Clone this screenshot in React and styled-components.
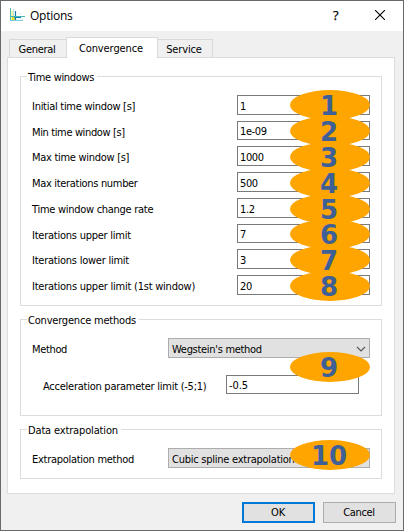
import React from "react";
import styled, { createGlobalStyle } from "styled-components";

const GlobalStyle = createGlobalStyle`
  * { box-sizing: border-box; }
  body { margin: 0; background: #fff; overflow: hidden; }
`;

const Dialog = styled.main`
  width: 404px;
  height: 531px;
  border: 1px solid #69696b;
  background: #f0f0f0;
  color: #000;
  font: 11px/14px "DejaVu Sans Condensed", "DejaVu Sans", sans-serif;
  font-stretch: condensed;
  white-space: nowrap;
`;

const TitleBar = styled.header`
  display: flex;
  align-items: center;
  height: 30px;
  padding: 0 18px 2px 8px;
  background: #fff;
`;

const Title = styled.h1`
  flex: 1;
  margin: 2px 0 0 3px;
  font: 12px/16px "Open Sans", sans-serif;
  letter-spacing: -0.25px;
`;

const HelpMark = styled.span`
  width: 8px;
  margin-right: 34px;
  font: 13px/16px "Open Sans", sans-serif;
  -webkit-text-stroke: 0.25px #000;
`;

const TabStrip = styled.nav`
  display: flex;
  align-items: flex-end;
  height: 26px;
  padding-left: 8px;
`;

const Tab = styled.div`
  display: flex;
  align-items: center;
  justify-content: center;
  width: ${(p) => p.$w}px;
  height: ${(p) => (p.$active ? 21 : 18)}px;
  margin-bottom: ${(p) => (p.$active ? -1 : 0)}px;
  padding-top: ${(p) => (p.$active ? 1 : 2)}px;
  padding-right: 2px;
  border: 1px solid #d9d9d9;
  border-bottom: 0;
  border-left-width: ${(p) => (p.$joined ? 0 : 1)}px;
  border-right-width: ${(p) => (p.$openRight ? 0 : 1)}px;
  background: ${(p) => (p.$active ? "#fff" : "#f0f0f0")};
  z-index: ${(p) => (p.$active ? 1 : 0)};
`;

const Panel = styled.section`
  display: flex;
  flex-direction: column;
  gap: 13px;
  width: 388px;
  height: 437px;
  margin-left: 6px;
  padding: 18px 12px 0;
  border: 1px solid #dcdcdc;
  background: #fff;
`;

const Group = styled.section`
  width: 362px;
  height: ${(p) => p.$h}px;
  border: 1px solid #dcdcdc;
`;

const Legend = styled.h2`
  width: max-content;
  height: 14px;
  margin: -7px 0 0 6px;
  padding: 1px 3px 0 1px;
  background: #fff;
  font: inherit;
`;

const Rows = styled.div`
  display: grid;
  grid-template-rows: 26px 25px 26px 26px 26px 25px 26px 20px;
  padding-top: 11px;
`;

const Row = styled.div`
  display: flex;
  align-items: flex-start;
  justify-content: space-between;
  margin-top: ${(p) => p.$top || 0}px;
  padding: 0 ${(p) => p.$right || 11}px 0 ${(p) => p.$left || 11}px;
`;

const Label = styled.label`
  height: 19px;
  padding-top: 5px;
`;

const Text = styled.span`
  letter-spacing: ${(p) => p.$track ?? -0.25}px;
`;

const Field = styled.div`
  position: relative;
  width: 133px;
  height: ${(p) => p.$h || 20}px;
  padding: ${(p) => (p.$h === 19 ? 3 : 4)}px 0 0 2px;
  border: 1px solid #7a7a7a;
  background: #fff;
`;

const Combo = styled.div`
  position: relative;
  display: flex;
  justify-content: space-between;
  width: 202px;
  height: 20px;
  padding: 3px 3px 0;
  border: 1px solid #adadad;
  background: #e1e1e1;
`;

const Badge = styled.span`
  position: absolute;
  z-index: 2;
  top: ${(p) => p.$top}px;
  right: -1px;
  display: flex;
  align-items: center;
  justify-content: center;
  width: 80px;
  height: 30px;
  padding: 1px 2px 0 0;
  border-radius: 50%;
  background: #ffa500;
  color: #3e6096;
  font: bold 26px/24px "DejaVu Sans", sans-serif;
`;

const Actions = styled.footer`
  display: flex;
  justify-content: flex-end;
  gap: 8px;
  padding: 8px 7px 0 0;
`;

const Button = styled.button`
  width: 73px;
  height: 21px;
  padding: 0 1px 0 0;
  border: ${(p) => (p.$primary ? "2px solid #0078d7" : "1px solid #adadad")};
  background: #e1e1e1;
  color: #000;
  font: inherit;
`;

const AppIcon = () => (
  <svg width="18" height="18" viewBox="0 0 18 18">
    <path d="M2 5h3v10H2z" fill="#f2f5a8" />
    <path d="M3 10h3v5H3z" fill="#dbe22d" />
    <path d="M1.5 2v12" stroke="#55bdb4" />
    <path d="M6.5 5v9" stroke="#147aa9" strokeWidth="1.2" />
    <path d="M4.5 3v7" stroke="#b5e0df" />
    <path d="M1 10.5h15" stroke="#42b8b4" />
    <path d="M5 11.5h7" stroke="#1a84b2" />
    <path d="M1 14.5h13" stroke="#7ccfd5" />
    <path d="M9 7.5h4M8 13h6" stroke="#dff1ef" />
  </svg>
);

const CloseIcon = () => (
  <svg width="10" height="10" viewBox="0 0 10 10">
    <path d="M0 0L10 10M10 0L0 10" stroke="#000" strokeWidth="1.1" />
  </svg>
);

const Chevron = () => (
  <svg width="10" height="12" viewBox="0 0 10 12">
    <path d="M1 5L5 9L9 5" fill="none" stroke="#555" strokeWidth="1.1" />
  </svg>
);

const ComboText = styled(Text)`
  padding-top: 1px;
`;

const parameters = [
  ["Initial time window [s]", "1", 20, -6, -0.28],
  ["Min time window [s]", "1e-09", 19, -6, -0.37],
  ["Max time window [s]", "1000", 20, -5, -0.29],
  ["Max iterations number", "500", 20, -5, -0.32],
  ["Time window change rate", "1.2", 20, -5, -0.28],
  ["Iterations upper limit", "7", 19, -6, -0.24],
  ["Iterations lower limit", "3", 20, -5, -0.24],
  ["Iterations upper limit (1st window)", "20", 20, -5, -0.23],
];

export default function App() {
  return (
    <>
      <GlobalStyle />
      <Dialog>
        <TitleBar>
          <AppIcon />
          <Title>Options</Title>
          <HelpMark>?</HelpMark>
          <CloseIcon />
        </TitleBar>
        <TabStrip>
          <Tab $w={57} $openRight><Text $track={-0.3}>General</Text></Tab>
          <Tab $w={92} $active><Text $track={-0.1}>Convergence</Text></Tab>
          <Tab $w={55} $joined><Text $track={-0.15}>Service</Text></Tab>
        </TabStrip>
        <Panel>
          <Group $h={230}>
            <Legend><Text $track={-0.33}>Time windows</Text></Legend>
            <Rows>
              {parameters.map(([label, value, height, top, track], i) => (
                <Row key={label}>
                  <Label><Text $track={track}>{label}</Text></Label>
                  <Field $h={height}>
                    <Text $track={-0.4}>{value}</Text>
                    <Badge $top={top}>{i + 1}</Badge>
                  </Field>
                </Row>
              ))}
            </Rows>
          </Group>
          <Group $h={97}>
            <Legend><Text $track={-0.2}>Convergence methods</Text></Legend>
            <Row $top={11}>
              <Label><Text $track={-0.35}>Method</Text></Label>
              <Combo>
                <ComboText $track={-0.3}>Wegstein's method</ComboText>
                <Chevron />
                <Badge $top={13}>9</Badge>
              </Combo>
            </Row>
            <Row $top={17} $left={22} $right={22}>
              <Label><Text>Acceleration parameter limit (-5;1)</Text></Label>
              <Field $h={19}><Text $track={-0.1}>-0.5</Text></Field>
            </Row>
          </Group>
          <Group $h={50}>
            <Legend><Text $track={-0.15}>Data extrapolation</Text></Legend>
            <Row $top={11}>
              <Label><Text $track={-0.28}>Extrapolation method</Text></Label>
              <Combo>
                <ComboText>Cubic spline extrapolation</ComboText>
                <Chevron />
                <Badge $top={-9}>10</Badge>
              </Combo>
            </Row>
          </Group>
        </Panel>
        <Actions>
          <Button $primary><Text>OK</Text></Button>
          <Button><Text $track={-0.35}>Cancel</Text></Button>
        </Actions>
      </Dialog>
    </>
  );
}
